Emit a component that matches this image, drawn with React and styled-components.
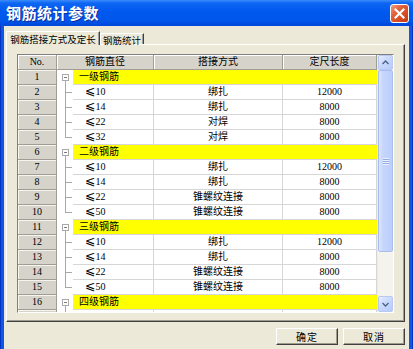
import React from 'react';
import styled, { createGlobalStyle } from 'styled-components';

const Global = createGlobalStyle`
  html, body { margin: 0; padding: 0; background: #ece9d8; }
  body { font-family: "Liberation Serif", "Noto Sans CJK SC", serif; color: #000; }
  * { box-sizing: border-box; }
`;

const Window = styled.div`
  width: 413px;
  height: 349px;
  display: flex;
  flex-direction: column;
  overflow: hidden;
  background: #0c58e4;
  box-shadow: inset 1px 0 #0733c4, inset -1px 0 #0733c4;
`;

const TitleBar = styled.div`
  height: 26px;
  flex: none;
  display: flex;
  align-items: center;
  justify-content: space-between;
  padding: 0 4px 0 6px;
  background: linear-gradient(180deg, #3b8cfb 0%, #0e66f3 12%, #0059ee 45%, #0056e9 80%, #0047d9 100%);
`;

const Title = styled.div`
  color: #fff;
  font: bold 15px "Noto Sans CJK SC", sans-serif;
  letter-spacing: 0.5px;
  text-shadow: 1px 1px 0 #0b2d9c;
  line-height: 26px;
`;

const CloseBtn = styled.div`
  width: 19px;
  height: 19px;
  border: 1px solid #fff;
  border-radius: 3px;
  background: linear-gradient(135deg, #f0a084 0%, #e2623a 35%, #d44a20 70%, #c23a14 100%);
  display: flex;
  align-items: center;
  justify-content: center;
`;

const Body = styled.div`
  flex: 1;
  margin: 0 4px;
  background: #ece9d8;
  display: flex;
  flex-direction: column;
  padding: 5px 0 0 2px;
`;

const TabStrip = styled.div`
  display: flex;
  align-items: flex-end;
  height: 14px;
  margin-bottom: -1px;
  position: relative;
  z-index: 1;
`;

const Tab = styled.div`
  width: ${p => p.$w}px;
  height: ${p => (p.$active ? 14 : 11)}px;
  margin-bottom: ${p => (p.$active ? 0 : 1)}px;
  border: 1px solid;
  border-bottom: none;
  border-color: #fff #404040 transparent #fff;
  box-shadow: inset -1px 0 #a0a0a0;
  background: #ece9d8;
  font-family: "Noto Sans CJK SC", sans-serif;
  font-size: 9.5px;
  line-height: 12px;
  text-align: center;
  white-space: nowrap;
  padding-top: ${p => (p.$active ? 1 : 0)}px;
`;

const Panel = styled.div`
  margin-right: 4px;
  height: 278px;
  border: 1px solid;
  border-color: #fff #404040 #404040 #fff;
  box-shadow: inset -1px -1px #9d9a8e;
  padding: 9px 0 0 10px;
`;

const Grid = styled.div`
  width: 377px;
  height: 259px;
  border: 1px solid;
  border-color: #7f7f7f #fff #fff #7f7f7f;
  display: flex;
  background: #fff;
`;

const TableArea = styled.div`
  width: 359px;
  display: flex;
  flex-direction: column;
  overflow: hidden;
  font-size: 10px;
`;

const HeaderRow = styled.div`
  display: grid;
  grid-template-columns: 39px 97px 129px 94px;
  height: 15px;
  flex: none;
`;

const HeaderCell = styled.div`
  background: #d6d3cb;
  border-right: 1px solid #a09d94;
  border-bottom: 1px solid #a09d94;
  box-shadow: inset 1px 1px #fff;
  text-align: center;
  line-height: 14px;
  white-space: nowrap;
`;

const Row = styled.div`
  display: grid;
  grid-template-columns: ${p => (p.$group ? '39px 16px 304px' : '39px 16px 81px 129px 94px')};
  height: 15px;
  flex: none;
`;

const NoCell = styled.div`
  background: #d6d3cb;
  border-right: 1px solid #a09d94;
  border-bottom: 1px solid #a09d94;
  box-shadow: inset 1px 1px #f5f4ef;
  text-align: center;
  line-height: 14px;
`;

const TreeCell = styled.div`
  width: 16px;
  height: 15px;
  display: flex;
`;

const GroupCell = styled.div`
  background: #ffff00;
  border-bottom: 1px solid #d6d6d6;
  padding-left: 6px;
  line-height: 14px;
  white-space: nowrap;
`;

const Cell = styled.div`
  border-right: 1px solid #d6d6d6;
  border-bottom: 1px solid #d6d6d6;
  line-height: 14px;
  white-space: nowrap;
  text-align: ${p => p.$align || 'center'};
  padding-left: ${p => p.$pad || 0}px;
`;

const Le = styled.span`
  font-family: "DejaVu Sans", "Noto Sans CJK SC", sans-serif;
  font-size: 12.5px;
  line-height: 12px;
`;

const Scrollbar = styled.div`
  width: 16px;
  display: flex;
  flex-direction: column;
  background: #f4f3ee;
  border-left: 1px solid #eeede5;
`;

const ScrollBtn = styled.div`
  height: ${p => p.$h}px;
  flex: none;
  border: 1px solid #b7c9f3;
  border-radius: 2px;
  background: linear-gradient(135deg, #e6eefe 0%, #c9d9fd 45%, #b6cbf9 100%);
  display: flex;
  align-items: center;
  justify-content: center;
`;

const Thumb = styled.div`
  height: 182px;
  flex: none;
  border: 1px solid #a9bdef;
  border-radius: 2px;
  background: linear-gradient(90deg, #dbe5fe 0%, #c6d6fc 30%, #bccefa 100%);
  display: flex;
  align-items: center;
  justify-content: center;
`;

const TrackRest = styled.div`
  flex: 1;
`;

const Footer = styled.div`
  display: flex;
  justify-content: flex-end;
  gap: 5px;
  margin-top: 6px;
  padding-right: 4px;
`;

const Button = styled.div`
  width: 62px;
  height: 17px;
  border: 1px solid;
  border-color: #fff #404040 #404040 #fff;
  box-shadow: inset -1px -1px #9d9a8e;
  background: #ece9d8;
  font-family: "Noto Sans CJK SC", sans-serif;
  font-size: 10px;
  line-height: 15px;
  text-align: center;
  letter-spacing: 1px;
`;

const LINE = '#a8a8a8';

const Tree = ({ kind }) => (
  <svg width="16" height="15" viewBox="0 0 16 15">
    {kind === 'group' && (
      <>
        <line x1="8.5" y1="10.5" x2="8.5" y2="15" stroke={LINE} />
        <rect x="5.5" y="4.5" width="6" height="6" fill="#fff" stroke={LINE} />
        <line x1="7" y1="7.5" x2="10" y2="7.5" stroke="#7a7a7a" />
      </>
    )}
    {kind !== 'group' && (
      <>
        <line x1="8.5" y1="0" x2="8.5" y2={kind === 'last' ? 8 : 15} stroke={LINE} />
        <line x1="9" y1="7.5" x2="15" y2="7.5" stroke={LINE} />
      </>
    )}
  </svg>
);

const groups = [
  {
    name: '一级钢筋',
    items: [
      ['10', '绑扎', '12000'],
      ['14', '绑扎', '8000'],
      ['22', '对焊', '8000'],
      ['32', '对焊', '8000'],
    ],
  },
  {
    name: '二级钢筋',
    items: [
      ['10', '绑扎', '12000'],
      ['14', '绑扎', '8000'],
      ['22', '锥螺纹连接', '8000'],
      ['50', '锥螺纹连接', '8000'],
    ],
  },
  {
    name: '三级钢筋',
    items: [
      ['10', '绑扎', '12000'],
      ['14', '绑扎', '8000'],
      ['22', '锥螺纹连接', '8000'],
      ['50', '锥螺纹连接', '8000'],
    ],
  },
  {
    name: '四级钢筋',
    items: [],
  },
];

export default function App() {
  let n = 0;
  const rows = [];
  groups.forEach((g, gi) => {
    n += 1;
    rows.push(
      <Row key={`g${gi}`} $group>
        <NoCell>{n}</NoCell>
        <TreeCell><Tree kind="group" /></TreeCell>
        <GroupCell>{g.name}</GroupCell>
      </Row>
    );
    g.items.forEach((it, ii) => {
      n += 1;
      rows.push(
        <Row key={`r${gi}-${ii}`}>
          <NoCell>{n}</NoCell>
          <TreeCell><Tree kind={ii === g.items.length - 1 ? 'last' : 'mid'} /></TreeCell>
          <Cell $align="left" $pad={12}><Le>⩽</Le>{it[0]}</Cell>
          <Cell>{it[1]}</Cell>
          <Cell>{it[2]}</Cell>
        </Row>
      );
    });
  });
  rows.push(
    <Row key="filler">
      <NoCell />
      <TreeCell><Tree kind="mid" /></TreeCell>
      <Cell />
      <Cell />
      <Cell />
    </Row>
  );

  return (
    <>
      <Global />
      <Window>
        <TitleBar>
          <Title>钢筋统计参数</Title>
          <CloseBtn>
            <svg width="11" height="11" viewBox="0 0 11 11">
              <path d="M1.5 1.5 L9.5 9.5 M9.5 1.5 L1.5 9.5" stroke="#fff" strokeWidth="2.2" strokeLinecap="square" />
            </svg>
          </CloseBtn>
        </TitleBar>
        <Body>
          <TabStrip>
            <Tab $active $w={94}>钢筋搭接方式及定长</Tab>
            <Tab $w={44}>钢筋统计</Tab>
          </TabStrip>
          <Panel>
            <Grid>
              <TableArea>
                <HeaderRow>
                  <HeaderCell>No.</HeaderCell>
                  <HeaderCell>钢筋直径</HeaderCell>
                  <HeaderCell>搭接方式</HeaderCell>
                  <HeaderCell>定尺长度</HeaderCell>
                </HeaderRow>
                {rows}
              </TableArea>
              <Scrollbar>
                <ScrollBtn $h={15}>
                  <svg width="7" height="5" viewBox="0 0 7 5">
                    <path d="M0.5 4 L3.5 1 L6.5 4" fill="none" stroke="#4d6185" strokeWidth="1.3" />
                  </svg>
                </ScrollBtn>
                <Thumb>
                  <svg width="8" height="7" viewBox="0 0 8 7">
                    <path d="M1 0.5 H7 M1 2.5 H7 M1 4.5 H7 M1 6.5 H7" stroke="#eef3ff" />
                    <path d="M1 1.5 H7 M1 3.5 H7 M1 5.5 H7" stroke="#8faae6" />
                  </svg>
                </Thumb>
                <TrackRest />
                <ScrollBtn $h={16}>
                  <svg width="7" height="5" viewBox="0 0 7 5">
                    <path d="M0.5 1 L3.5 4 L6.5 1" fill="none" stroke="#4d6185" strokeWidth="1.3" />
                  </svg>
                </ScrollBtn>
              </Scrollbar>
            </Grid>
          </Panel>
          <Footer>
            <Button>确定</Button>
            <Button>取消</Button>
          </Footer>
        </Body>
      </Window>
    </>
  );
}
